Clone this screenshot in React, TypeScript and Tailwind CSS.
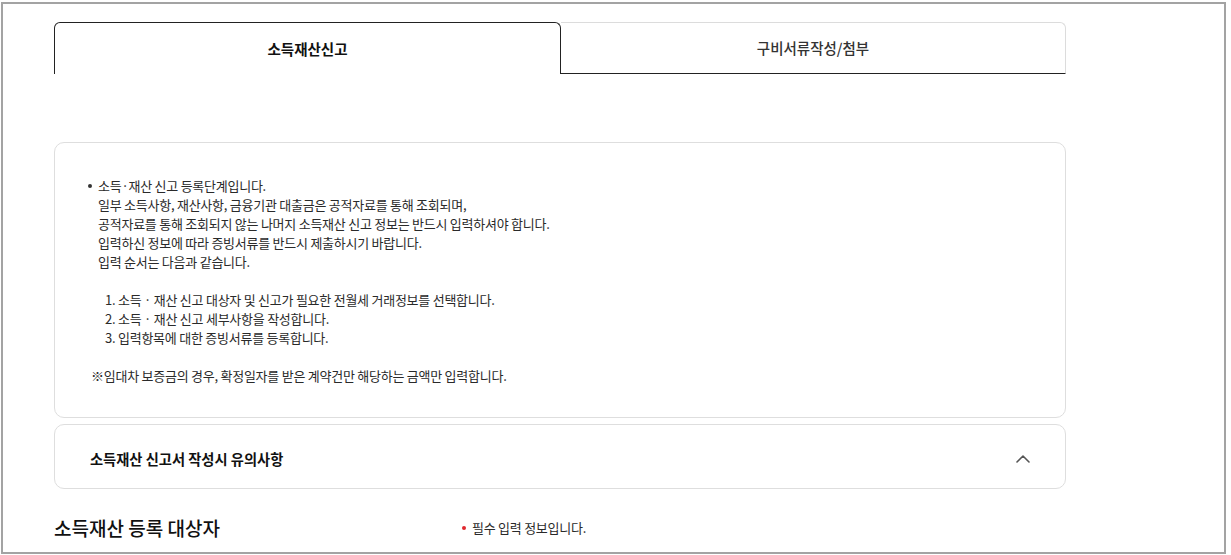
const font = { fontFamily: '"Noto Sans CJK KR", "Noto Sans", sans-serif' };

const introLines = [
  '일부 소득사항, 재산사항, 금융기관 대출금은 공적자료를 통해 조회되며,',
  '공적자료를 통해 조회되지 않는 나머지 소득재산 신고 정보는 반드시 입력하셔야 합니다.',
  '입력하신 정보에 따라 증빙서류를 반드시 제출하시기 바랍니다.',
  '입력 순서는 다음과 같습니다.',
];

const steps = [
  '1. 소득 · 재산 신고 대상자 및 신고가 필요한 전월세 거래정보를 선택합니다.',
  '2. 소득 · 재산 신고 세부사항을 작성합니다.',
  '3. 입력항목에 대한 증빙서류를 등록합니다.',
];

export default function App() {
  return (
    <div className="w-[1231px] h-[555px] bg-white pl-[1px] pt-[2px]" style={font}>
      <div className="w-[1225px] h-[552px] border-2 border-[#a3a3a3] overflow-hidden pl-[51px] pt-[18px]">
        <div className="w-[1012px]">
          {/* 탭 */}
          <div className="flex h-[52px]">
            <div className="w-[507px] border border-b-0 border-[#222] rounded-t-[6px] flex items-center justify-center text-[14.5px] font-bold text-[#111]">
              소득재산신고
            </div>
            <div className="flex-1 border-t border-r border-[#dcdcdc] rounded-tr-[6px] border-b border-b-[#222] flex items-center justify-center text-[14.5px] font-medium text-[#333]">
              구비서류작성/첨부
            </div>
          </div>

          {/* 안내 박스 */}
          <div className="mt-[68px] border border-[#dedede] rounded-[10px] pl-[33px] pt-[33px] pb-[32px] text-[13px] leading-[19px] tracking-[-0.25px] text-[#2a2a2a]">
            <div className="flex">
              <span className="w-[10px] h-[19px] flex items-center">
                <span className="w-[4px] h-[4px] rounded-full bg-[#333]" />
              </span>
              <div>
                <p>소득·재산 신고 등록단계입니다.</p>
                {introLines.map(l => <p key={l}>{l}</p>)}
                <p className="h-[19px]" />
                <ul className="pl-[7px]">
                  {steps.map(s => <li key={s}>{s}</li>)}
                </ul>
                <p className="h-[19px]" />
                <p className="-ml-[7px]">※임대차 보증금의 경우, 확정일자를 받은 계약건만 해당하는 금액만 입력합니다.</p>
              </div>
            </div>
          </div>

          {/* 유의사항 아코디언 */}
          <div className="mt-[6px] h-[65px] border border-[#dedede] rounded-[10px] flex items-center justify-between pl-[35px] pr-[35px] pt-[5px]">
            <span className="text-[14.25px] font-bold text-[#111]">소득재산 신고서 작성시 유의사항</span>
            <svg width="14" height="8" viewBox="0 0 14 8" fill="none" stroke="#555" strokeWidth="1.6" strokeLinecap="round" strokeLinejoin="round">
              <polyline points="1,7 7,1 13,7" />
            </svg>
          </div>

          {/* 등록 대상자 */}
          <div className="mt-[26px] flex items-center h-[26px]">
            <h2 className="w-[408px] text-[19px] font-medium text-[#111]">소득재산 등록 대상자</h2>
            <span className="w-[4px] h-[4px] rounded-full bg-[#e0282e] mr-[6px]" />
            <span className="text-[13px] tracking-[-0.25px] text-[#2a2a2a]">필수 입력 정보입니다.</span>
          </div>
        </div>
      </div>
    </div>
  );
}
